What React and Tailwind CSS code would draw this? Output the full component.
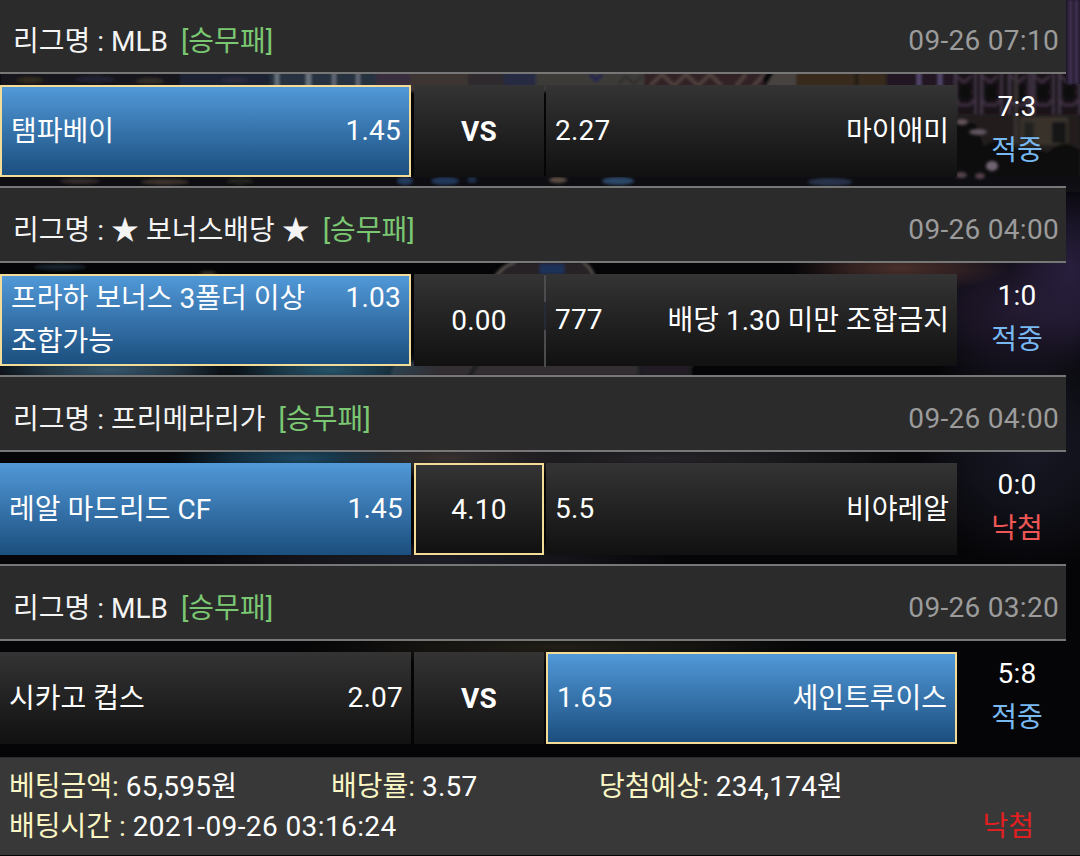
const matches = [
  {
    league: 'MLB',
    date: '09-26 07:10',
    home: { name: '탬파베이', odds: '1.45', win: true, picked: true },
    draw: { label: 'VS' },
    away: { name: '마이애미', odds: '2.27' },
    score: '7:3',
    hit: true,
  },
  {
    league: '★ 보너스배당 ★',
    date: '09-26 04:00',
    home: { name: '프라하 보너스 3폴더 이상 조합가능', odds: '1.03', win: true, picked: true },
    draw: { label: '0.00' },
    away: { name: '배당 1.30 미만 조합금지', odds: '777' },
    score: '1:0',
    hit: true,
  },
  {
    league: '프리메라리가',
    date: '09-26 04:00',
    home: { name: '레알 마드리드 CF', odds: '1.45', win: true },
    draw: { label: '4.10', picked: true },
    away: { name: '비야레알', odds: '5.5' },
    score: '0:0',
    hit: false,
  },
  {
    league: 'MLB',
    date: '09-26 03:20',
    home: { name: '시카고 컵스', odds: '2.07' },
    draw: { label: 'VS' },
    away: { name: '세인트루이스', odds: '1.65', win: true, picked: true },
    score: '5:8',
    hit: true,
  },
];

function cardStyle({ win, picked }) {
  const fill = win
    ? 'bg-linear-to-b from-[#5199d8] via-[#3673ab] to-[#1b4f7e]'
    : 'bg-linear-to-b from-[#343434] via-[#222222] to-[#111111]';
  return `${fill} ${picked ? 'border-2 border-[#f3dc98]' : ''}`;
}

// [cx, cy, rx, ry, color]
const lamps = [
  [30, 80, 14, 3, '#33291f'], [95, 79, 20, 3, '#242434'], [150, 81, 14, 3, '#352f26'],
  [235, 80, 14, 3, '#2b2a3e'], [80, 181, 20, 3, '#322c2a'], [165, 182, 24, 3, '#3a332a'],
  [240, 181, 14, 3, '#24231f'], [405, 181, 8, 4, '#243a5c'], [445, 181, 14, 4, '#20375a'],
  [472, 180, 5, 3, '#1f2f4a'], [558, 180, 9, 3, '#5b4d44'], [618, 181, 16, 4, '#2b4768'],
  [830, 182, 22, 4, '#273348'], [962, 122, 6, 3, '#65545b'], [978, 132, 9, 3, '#625761'],
  [992, 166, 6, 5, '#706372'], [961, 175, 6, 3, '#55434c'], [980, 176, 5, 3, '#55434c'],
  [60, 267, 26, 3, '#17212a'], [208, 273, 8, 2, '#373029'],
];

// Wide, faint pools of light
const glows = [
  [1020, 310, 120, 80, '#241b32'], [1070, 270, 60, 90, '#281f3d'], [900, 268, 110, 24, '#4a302c'],
  [1030, 450, 130, 120, '#171824'], [110, 370, 130, 22, '#36566c'], [330, 370, 110, 24, '#26536a'],
  [300, 458, 130, 22, '#1c465f'], [450, 458, 120, 22, '#3c3533'], [660, 458, 260, 20, '#262428'],
  [430, 560, 260, 20, '#1e1e27'], [560, 647, 260, 18, '#211e17'],
];

// Night city scene behind the list
function Backdrop() {
  const columns = [964, 990, 1018, 1042, 1068];
  return (
    <svg className="absolute inset-0 h-full w-full" viewBox="0 0 1080 856" preserveAspectRatio="none">
      <defs>
        <filter id="soft" x="-20%" y="-20%" width="140%" height="140%">
          <feGaussianBlur stdDeviation="1.6" />
        </filter>
        {glows.map((glow, i) => (
          <radialGradient key={i} id={`glow-${i}`}>
            <stop offset="0" stopColor={glow[4]} />
            <stop offset="0.5" stopColor={glow[4]} stopOpacity="0.6" />
            <stop offset="1" stopColor={glow[4]} stopOpacity="0" />
          </radialGradient>
        ))}
      </defs>
      <rect width="1080" height="856" fill="#050507" />

      {/* Skyline strip */}
      <g filter="url(#soft)">
        <rect y="66" width="270" height="120" fill="#15131a" />
        <rect x="180" y="66" width="90" height="26" fill="#1b2231" />
        <rect x="270" y="66" width="140" height="26" fill="#283240" />
        <rect x="275" y="66" width="4" height="26" fill="#6a7480" />
        <rect x="306" y="66" width="5" height="26" fill="#6a7480" />
        <rect x="332" y="66" width="4" height="26" fill="#636a77" />
        <rect x="356" y="66" width="4" height="26" fill="#636a77" />
        <rect x="376" y="66" width="34" height="26" fill="#392d3d" />
        <rect x="410" y="66" width="60" height="26" fill="#3c3432" />
        <rect x="468" y="66" width="36" height="26" fill="#2e2a2d" />
        <rect x="504" y="66" width="32" height="26" fill="#252b42" />
        <rect x="536" y="66" width="108" height="26" fill="#3e3b39" />
        <path d="M590 74l6 6 6-6" stroke="#22254f" strokeWidth="4" fill="none" />
        <path d="M618 84l8-8 8 8 8-8" stroke="#2b2a2b" strokeWidth="2" fill="none" />
        <rect x="644" y="66" width="120" height="26" fill="#302225" />
        <path d="M650 86l12-12 12 12 12-12 12 12 12-12 12 12M736 86l10-12M752 88l14-16" stroke="#55453f" strokeWidth="3" fill="none" />
        <path d="M764 88l12-20h20v20z" fill="#474240" />
        <rect x="796" y="66" width="90" height="26" fill="#38291f" />
        <rect x="855" y="66" width="3" height="26" fill="#1b1410" />
        <rect x="886" y="66" width="74" height="26" fill="#201623" />
        <rect x="917" y="66" width="4" height="26" fill="#554870" />
        <rect x="938" y="66" width="4" height="26" fill="#554870" />
      </g>

      {/* Theater front */}
      <rect x="957" y="70" width="123" height="112" fill="#1a1419" />
      <g filter="url(#soft)">
        {columns.map((x) => (
          <g key={x}>
            <rect x={x - 10} y="70" width="3" height="44" fill="#43384a" />
            <rect x={x + 10} y="70" width="3" height="44" fill="#3e3042" />
            <rect x={x - 5} y="84" width="12" height="16" rx="5" fill="#09070b" />
            <path
              d={`M${x - 8} 76l8 6 8-6M${x - 8} 100l4 5h10l4-5`}
              stroke="#4b3950"
              strokeWidth="2"
              fill="none"
            />
          </g>
        ))}
        <rect x="950" y="114" width="130" height="38" fill="#241f1d" />
        <rect x="1014" y="70" width="4" height="74" fill="#393031" />
        <rect x="1020" y="117" width="48" height="28" fill="#37302a" />
        <rect x="1024" y="122" width="10" height="20" fill="#242020" />
        <rect x="1052" y="122" width="14" height="21" fill="#161313" />
        <path d="M950 118l26 6 8 22q14-12 32 2 26 2 32 4 16-16 32-2v42H950z" fill="#100e10" />
      </g>
      <rect x="1066" y="0" width="14" height="84" fill="#21172b" />
      <g filter="url(#soft)" fill="#46375c">
        <rect x="1069" y="0" width="3" height="84" />
        <rect x="1075" y="0" width="3" height="84" />
      </g>

      {/* Street level */}
      <rect x="0" y="176" width="1080" height="12" fill="#0d0d12" />
      <g filter="url(#soft)">
        {lamps.map(([cx, cy, rx, ry, color], i) => (
          <ellipse key={i} cx={cx} cy={cy} rx={rx} ry={ry} fill={color} />
        ))}
        <path d="M493 280q8-14 22-18h68q10 6 12 18z" fill="#262425" />
        <path d="M493 280q8-14 22-18M583 262q10 6 12 18" stroke="#6b635c" strokeWidth="2" fill="none" />
        <path d="M540 264h24v10h-24z" fill="#1c3358" />
        <path d="M395 362h300l-8 14H390z" fill="#302f30" />
        <path d="M478 362l-8 14M640 362h50v14h-50z" stroke="#1d1b1c" strokeWidth="4" fill="#221d28" />
      </g>
      {glows.map(([cx, cy, rx, ry], i) => (
        <ellipse key={i} cx={cx} cy={cy} rx={rx} ry={ry} fill={`url(#glow-${i})`} />
      ))}
      <rect x="544" y="275" width="2" height="92" fill="#4c4c4e" />
      <rect x="544" y="302" width="2" height="28" fill="#262b36" />
    </svg>
  );
}

function MatchHeader({ league, date }) {
  return (
    <div className="flex h-[77px] w-[1066px] items-center justify-between border-y-2 border-[#777777] bg-[#2b2b2b] pt-[9px] pr-[7px] pl-[13px]">
      <div className="mt-[2px] whitespace-pre text-[#f4f4f4]">
        리그명 : {league}
        <span className="ml-[13px] text-[#7bc873]">[승무패]</span>
      </div>
      <div className="tracking-[0.3px] text-[#9b9b9b]">{date}</div>
    </div>
  );
}

function Match({ match }) {
  const { home, draw, away } = match;
  return (
    <div className="h-[189px]">
      <MatchHeader league={match.league} date={match.date} />
      <div className="mt-[11px] flex h-[92px]">
        <div className={`mr-[3px] flex w-[411px] items-center pr-2 pl-[9px] ${cardStyle(home)}`}>
          <div className="flex w-full items-start justify-between">
            <span className="w-[310px] break-keep">{home.name}</span>
            <span className="-mt-px tracking-[0.2px]">{home.odds}</span>
          </div>
        </div>
        <div className={`mr-[2px] flex w-[130px] items-center justify-center tracking-[0.2px] ${cardStyle(draw)}`}>
          <span className={draw.label === 'VS' ? 'font-bold' : ''}>{draw.label}</span>
        </div>
        <div className={`flex w-[411px] items-center justify-between pr-2 pl-[9px] ${cardStyle(away)}`}>
          <span className="-mt-[2px] tracking-[0.2px]">{away.odds}</span>
          <span>{away.name}</span>
        </div>
        <div className="w-[120px] text-center">
          <div className="tracking-[0.2px]">{match.score}</div>
          <div className={`mt-px ${match.hit ? 'text-[#78b9f2]' : 'text-[#f05656]'}`}>{match.hit ? '적중' : '낙첨'}</div>
        </div>
      </div>
    </div>
  );
}

function Summary() {
  return (
    <div className="h-[98px] border-t border-[#2a2a2a] bg-[#383838] pt-[9px] pl-[9px] leading-[40px]">
      <div className="flex">
        <div className="w-[322px]">
          <span className="text-[#fbf7c4]">베팅금액:</span> <span className="tracking-[0.2px]">65,595원</span>
        </div>
        <div className="w-[268px]">
          <span className="text-[#fbf7c4]">배당률:</span> <span className="tracking-[0.2px]">3.57</span>
        </div>
        <div>
          <span className="text-[#fbf7c4]">당첨예상:</span> <span className="tracking-[0.2px]">234,174원</span>
        </div>
      </div>
      <div className="flex justify-between pr-[46px]">
        <div>
          <span className="text-[#fbf7c4]">배팅시간 :</span>{' '}
          <span className="tracking-[0.4px]">2021-09-26 03:16:24</span>
        </div>
        <div className="text-[#e02020]">낙첨</div>
      </div>
    </div>
  );
}

export default function App() {
  return (
    <div className="relative h-[856px] w-[1080px] overflow-hidden bg-black font-['Roboto','Noto_Sans_CJK_KR',sans-serif] text-[28px] leading-[43px] text-white">
      <Backdrop />
      <div className="relative -mt-[3px]">
        {matches.map((match, i) => (
          <Match key={i} match={match} />
        ))}
        <div className="pt-[4px]">
          <Summary />
        </div>
      </div>
    </div>
  );
}
